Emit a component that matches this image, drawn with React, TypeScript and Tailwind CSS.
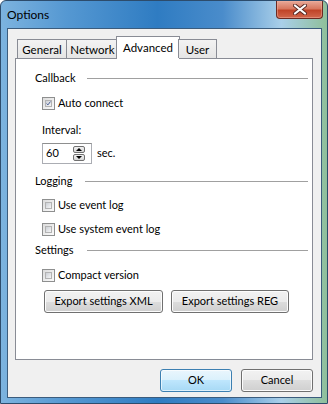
import React from "react";

const font = { fontFamily: 'Lato, "Noto Sans", sans-serif' };

const Checkbox = ({ checked }: { checked?: boolean }) => (
  <span className="flex h-[13px] w-[13px] shrink-0 items-center justify-center border border-[#8e8f8f] bg-[linear-gradient(135deg,#dcdcdc,#fbfbfb)] p-[2px]">
    <span className="flex h-full w-full items-center justify-center border border-[#b3b3b3] bg-[linear-gradient(135deg,#cbcfd5,#f6f6f6)]">
      {checked && (
        <svg width="9" height="9" viewBox="0 0 9 9">
          <path d="M1 4.5 L3.5 7 L8 1" fill="none" stroke="#4a5f97" strokeWidth="1.8" />
        </svg>
      )}
    </span>
  </span>
);

const CheckRow = ({ label, checked }: { label: string; checked?: boolean }) => (
  <div className="flex h-[16px] items-center gap-[3px] pl-[26px]">
    <Checkbox checked={checked} />
    <span>{label}</span>
  </div>
);

const Group = ({ title, line }: { title: string; line: number }) => (
  <div className="flex h-[16px] items-center pl-[19px] pr-[4px]">
    <span style={{ width: line }}>{title}</span>
    <span className="h-px flex-1 bg-[#a0a0a0]" />
  </div>
);

const Button = ({ label, w, primary }: { label: string; w: string; primary?: boolean }) => (
  <button
    className={
      "flex h-[23px] items-center justify-center rounded-[3px] border text-[11px] text-black " +
      w +
      (primary
        ? " border-[#3c7fb1] bg-[linear-gradient(#eaf6fd_0%,#d9f0fc_50%,#bee6fd_50%,#a7d9f5_100%)] shadow-[inset_0_0_0_1px_#ffffffa0]"
        : " border-[#707070] bg-[linear-gradient(#f2f2f2_0%,#ebebeb_50%,#dddddd_50%,#cfcfcf_100%)] shadow-[inset_0_0_0_1px_#fcfcfc]")
    }
  >
    {label}
  </button>
);

const tabs = [
  { name: "General", w: "w-[49px]" },
  { name: "Network", w: "w-[52px]" },
  { name: "Advanced", w: "w-[64px]", active: true },
  { name: "User", w: "w-[39px]" },
];

export default function App() {
  return (
    <div
      className="relative flex h-[404px] w-[328px] flex-col overflow-hidden rounded-t-[6px] border border-[#2d4c6c] bg-[linear-gradient(90deg,#7cb3df_0%,#5598d2_20%,#2f7cc2_48%,#4a8ccb_68%,#a9cfe9_86%,#8fbf9a_100%)] text-[11px] text-black"
      style={font}
    >
      {/* title bar */}
      <div className="flex h-[27px] shrink-0 items-start">
        <span className="pl-[6px] pt-[5px] text-[12px]">Options</span>
        <button className="ml-auto mr-[4px] flex h-[18px] w-[47px] items-center justify-center rounded-b-[4px] border border-t-0 border-[#6b2a22] bg-[linear-gradient(#e9a999_0%,#d8785f_45%,#c04428_55%,#d2674c_100%)] shadow-[inset_0_0_0_1px_#f0b0a080]">
          <svg width="14" height="11" viewBox="0 0 14 11">
            <path d="M2 1.5 L12 9.5 M12 1.5 L2 9.5" stroke="#5a2a24" strokeWidth="4" strokeLinecap="round" />
            <path d="M2 1.5 L12 9.5 M12 1.5 L2 9.5" stroke="#ffffff" strokeWidth="2.2" strokeLinecap="round" />
          </svg>
        </button>
      </div>

      {/* client area */}
      <div className="ml-[6px] mr-[5px] flex h-[370px] flex-col border border-[#3b5c7d] bg-[#f0f0f0] px-[7px] pt-[7px]">
        {/* tabs */}
        <div className="relative z-10 flex h-[22px] items-end pl-[2px]">
          {tabs.map((t) =>
            t.active ? (
              <div
                key={t.name}
                className={"-mx-[2px] mb-[-1px] flex h-[23px] items-start justify-center border border-b-0 border-[#898c95] bg-white pt-[2px] text-[11.5px] " + t.w}
              >
                {t.name}
              </div>
            ) : (
              <div
                key={t.name}
                className={"flex h-[19px] items-center justify-center border border-b-0 border-r-0 border-[#898c95] bg-[linear-gradient(#f3f3f3,#e5e5e5)] pt-[2px] text-[11.5px] last:border-r " + t.w}
              >
                {t.name}
              </div>
            )
          )}
        </div>

        {/* panel */}
        <div className="flex h-[302px] w-[298px] flex-col border border-[#898c95] bg-white">
          <div className="mt-[11px]">
            <Group title="Callback" line={52} />
          </div>
          <div className="mt-[9px]">
            <CheckRow label="Auto connect" checked />
          </div>
          <div className="mt-[11px] flex h-[16px] items-center pl-[26px]">Interval:</div>
          <div className="mt-[5px] flex items-center pl-[26px]">
            <div className="flex h-[21px] w-[50px] items-center border border-[#abadb3] border-t-[#8e8f8f] bg-white pl-[3px] pr-[6px]">
              <span className="flex-1">60</span>
              <span className="flex flex-col gap-[1px]">
                <span className="flex h-[7px] w-[12px] items-center justify-center rounded-[2px] border border-[#707070] bg-[linear-gradient(#f2f2f2,#d6d6d6)]">
                  <svg width="6" height="3" viewBox="0 0 6 3">
                    <path d="M0 3 L3 0 L6 3 Z" fill="#000" />
                  </svg>
                </span>
                <span className="flex h-[7px] w-[12px] items-center justify-center rounded-[2px] border border-[#707070] bg-[linear-gradient(#f2f2f2,#d6d6d6)]">
                  <svg width="6" height="3" viewBox="0 0 6 3">
                    <path d="M0 0 L6 0 L3 3 Z" fill="#000" />
                  </svg>
                </span>
              </span>
            </div>
            <span className="ml-[5px]">sec.</span>
          </div>
          <div className="mt-[9px]">
            <Group title="Logging" line={50} />
          </div>
          <div className="mt-[8px]">
            <CheckRow label="Use event log" />
          </div>
          <div className="mt-[8px]">
            <CheckRow label="Use system event log" />
          </div>
          <div className="mt-[5px]">
            <Group title="Settings" line={52} />
          </div>
          <div className="mt-[9px]">
            <CheckRow label="Compact version" />
          </div>
          <div className="mt-[7px] flex gap-[8px] pl-[28px]">
            <Button label="Export settings XML" w="w-[119px]" />
            <Button label="Export settings REG" w="w-[118px]" />
          </div>
        </div>

        {/* dialog buttons */}
        <div className="mt-[9px] flex w-[298px] justify-end gap-[9px]">
          <Button label="OK" w="w-[72px]" primary />
          <Button label="Cancel" w="w-[72px]" />
        </div>
      </div>
    </div>
  );
}
